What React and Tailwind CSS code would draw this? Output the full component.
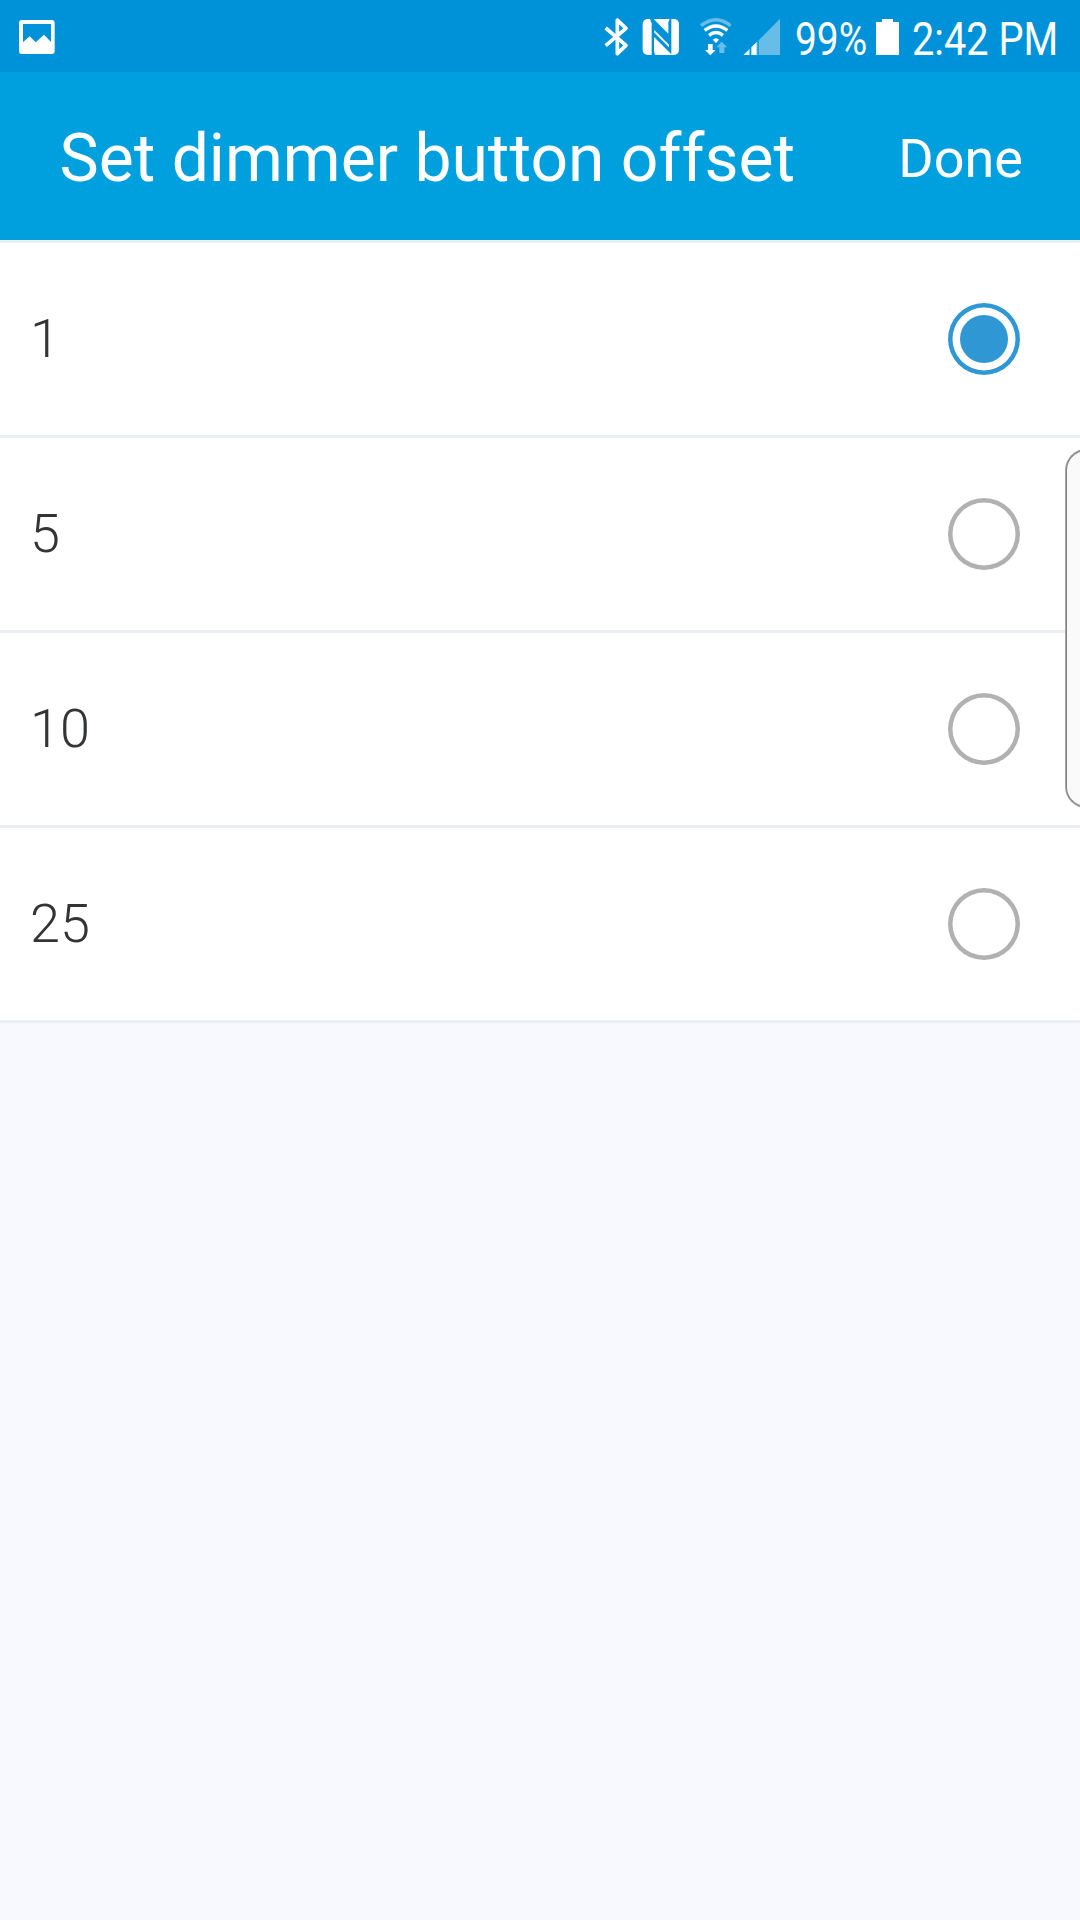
import React, { useState } from "react";

const OPTIONS = [1, 5, 10, 25];

function PictureIcon() {
  return (
    <svg className="ml-[19px] h-[72px] w-[36px]" viewBox="57 0 108 216" fill="#fff">
      <path
        fillRule="evenodd"
        d="M66 60H155Q164 60 164 69V153Q164 162 155 162H66Q57 162 57 153V69Q57 60 66 60ZM69 72V127L89 109L107 127L132 104L153 126V72Z"
      />
    </svg>
  );
}

function BluetoothIcon() {
  return (
    <svg className="h-[72px] w-[26px]" viewBox="39 0 78 216" fill="none" stroke="#fff" strokeWidth="11" strokeLinejoin="round">
      <path d="M44 84L105 136L79 161V60L105 85L44 137" />
    </svg>
  );
}

function NfcIcon() {
  return (
    <svg className="ml-[12px] h-[72px] w-[38px]" viewBox="155 0 114 216">
      <rect x="157" y="57" width="109" height="108" rx="15" fill="#fff" />
      <path d="M179 57H190L234 101V70Q234 62 238 57H243V163L191 111V150Q191 160 195 165H184V70Z" fill="#0092d9" />
      <path d="M194 96L236 138V116L187 66L188 66Z" fill="#0092d9" />
      <path d="M192 90L236 134V142L192 98Z" fill="#fff" />
    </svg>
  );
}

function WifiIcon() {
  return (
    <svg className="ml-[19px] h-[72px] w-[34px]" viewBox="326 0 102 216" fill="none" strokeWidth="10">
      <path d="M332 77Q377 41 421 77" stroke="#66bee8" />
      <path d="M343 91Q377 65 411 91" stroke="#fff" />
      <path d="M356 106Q377 89 398 106" stroke="#fff" />
      <path d="M367 119Q377 110 386 119L377 129Z" fill="#fff" />
      <path d="M353 132H367V150H376L360 166L344 150H353Z" fill="#fff" />
      <path d="M387 159H402V142H411L394 125L378 142H387Z" fill="#66bee8" />
    </svg>
  );
}

function SignalIcon() {
  return (
    <svg className="ml-[10px] h-[72px] w-[38px]" viewBox="459 0 114 216">
      <path d="M570 56V165H506V121Z" fill="#66bee8" />
      <path d="M460 165L480 146V165ZM484 142L501 125V165H484Z" fill="#fff" />
      <path d="M478 148V165M501 125V165" stroke="#66bee8" strokeWidth="3" />
    </svg>
  );
}

function BatteryIcon() {
  return (
    <svg className="h-[72px] w-[24px]" viewBox="288 0 72 216">
      <path d="M306 57H339V66H357V165H288V66H306Z" fill="#fff" />
    </svg>
  );
}

function StatusBar() {
  return (
    <div className="flex h-[72px] items-center bg-[#0092d9] text-white">
      <PictureIcon />
      <div className="ml-auto flex h-full items-center">
        <BluetoothIcon />
        <NfcIcon />
        <WifiIcon />
        <SignalIcon />
        <div className="ml-[14px] flex h-full w-[81px] items-center">
          <span className="origin-left scale-x-[0.845] pt-[5px] text-[46px] leading-[76px] whitespace-nowrap">99%</span>
        </div>
        <BatteryIcon />
        <div className="ml-[12px] flex h-full w-[168px] items-center">
          <span className="origin-left scale-x-[0.863] pt-[5px] text-[46px] leading-[76px] whitespace-nowrap">2:42 PM</span>
        </div>
      </div>
    </div>
  );
}

function Radio({ checked }) {
  return (
    <span
      className={
        checked
          ? "flex size-[72px] items-center justify-center rounded-full shadow-[inset_0_0_0_4.5px_#2e97d4]"
          : "flex size-[72px] items-center justify-center rounded-full shadow-[inset_0_0_0_4.5px_#b1b1b1]"
      }
    >
      {checked && <span className="size-[48px] rounded-full bg-[#2e97d4]" />}
    </span>
  );
}

export default function App() {
  const [selected, setSelected] = useState(1);
  return (
    <div className="relative h-[1920px] w-[1080px] overflow-hidden bg-[#f7f9fe] font-['Roboto',sans-serif]">
      <StatusBar />
      <header className="flex h-[168px] items-center justify-between bg-[#00a0de] pt-[5px] pr-[57px] pl-[59.5px] text-white">
        <h1 className="text-[66px] leading-[76px] whitespace-nowrap">Set dimmer button offset</h1>
        <button className="text-[54px] leading-[64px]">Done</button>
      </header>
      <ul className="border-t-[3px] border-[#ebeef3]">
        {OPTIONS.map((value) => (
          <li
            key={value}
            onClick={() => setSelected(value)}
            className="flex h-[195px] items-center justify-between border-b-[3px] border-[#ebeef3] bg-white pr-[60px] pl-[30px]"
          >
            <span className="text-[54px] leading-[64px] font-light text-[#333436]">{value}</span>
            <Radio checked={value === selected} />
          </li>
        ))}
      </ul>
      <div className="absolute top-[450px] -right-[14px] h-[357px] w-[28px] rounded-l-[20px] border border-r-0 border-[#808080] bg-[#fafafa] shadow-[0_0_0_1px_#a8a8a8]" />
    </div>
  );
}
